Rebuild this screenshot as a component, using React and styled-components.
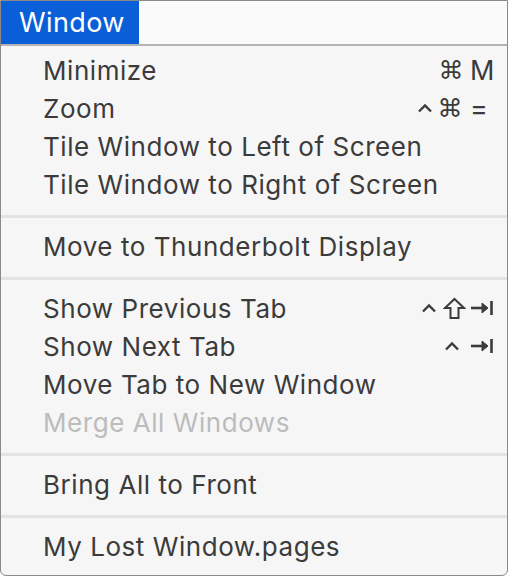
import React from 'react';
import styled, { createGlobalStyle } from 'styled-components';

const Global = createGlobalStyle`
  html, body { margin: 0; padding: 0; background: #ffffff; }
  body { font-family: Inter, "Noto Sans", "DejaVu Sans", sans-serif; }
`;

const Frame = styled.div`
  width: 508px;
  height: 576px;
  box-sizing: border-box;
  border: 1px solid #8a8a8a;
  border-radius: 0 0 6px 6px;
  background: #f6f6f6;
  overflow: hidden;
  display: flex;
  flex-direction: column;
`;

const MenuBar = styled.div`
  height: 43px;
  background: #fafafa;
  border-bottom: 2px solid #b4b4b4;
  display: flex;
`;

const MenuTitle = styled.div`
  width: 138px;
  background: #0a5fd8;
  color: #ffffff;
  font-size: 27px;
  letter-spacing: 0.4px;
  line-height: 43px;
  padding-left: 18px;
  box-sizing: border-box;
`;

const Menu = styled.div`
  padding: 5px 0 0;
  display: flex;
  flex-direction: column;
`;

const Item = styled.div`
  height: 38px;
  display: flex;
  align-items: center;
  justify-content: space-between;
  padding: 0 12px 0 42px;
  font-size: 26px;
  letter-spacing: 0.55px;
  color: ${p => (p.disabled ? '#bcbcbc' : '#3b3b3b')};
`;

const Separator = styled.div`
  height: 3px;
  background: #e3e3e3;
  margin: 12px 0 9px;
`;

const Shortcut = styled.div`
  display: flex;
  align-items: center;
  color: #3b3b3b;
`;

const Mods = styled.div`
  display: flex;
  align-items: center;
  justify-content: flex-end;
  gap: ${p => p.gap || 6}px;
`;

const Key = styled.div`
  width: 25px;
  margin-left: ${p => p.gap ?? 5}px;
  display: flex;
  align-items: center;
  font-size: 27px;
  letter-spacing: 0;
`;

const Cmd = styled.span`
  font-family: "DejaVu Sans", sans-serif;
  font-size: 25px;
  line-height: 1;
`;

const Ctrl = () => (
  <svg width="16" height="10" viewBox="0 0 16 10">
    <path d="M2 8.5 L8 2.5 L14 8.5" fill="none" stroke="#3b3b3b" strokeWidth="2.4" />
  </svg>
);

const Shift = () => (
  <svg width="23" height="23" viewBox="0 0 23 23">
    <path d="M11.5 2 L21 11 L15.5 11 L15.5 21 L7.5 21 L7.5 11 L2 11 Z" fill="none" stroke="#3b3b3b" strokeWidth="2" strokeLinejoin="miter" />
  </svg>
);

const Tab = () => (
  <svg width="24" height="16" viewBox="0 0 24 16">
    <path d="M1 8 L17 8" stroke="#3b3b3b" strokeWidth="2.6" />
    <path d="M12 3 L18 8 L12 13 Z" fill="#3b3b3b" stroke="#3b3b3b" strokeWidth="1" />
    <path d="M21.5 1 L21.5 15" stroke="#3b3b3b" strokeWidth="2.6" />
  </svg>
);

export default function App() {
  return (
    <>
      <Global />
      <Frame>
        <MenuBar>
          <MenuTitle>Window</MenuTitle>
        </MenuBar>
        <Menu>
          <Item>
            Minimize
            <Shortcut>
              <Mods><Cmd>⌘</Cmd></Mods>
              <Key gap={6}>M</Key>
            </Shortcut>
          </Item>
          <Item>
            Zoom
            <Shortcut>
              <Mods gap={4}><Ctrl /><Cmd>⌘</Cmd></Mods>
              <Key gap={7}>=</Key>
            </Shortcut>
          </Item>
          <Item>Tile Window to Left of Screen</Item>
          <Item>Tile Window to Right of Screen</Item>
          <Separator />
          <Item>Move to Thunderbolt Display</Item>
          <Separator />
          <Item>
            Show Previous Tab
            <Shortcut>
              <Mods><Ctrl /><Shift /></Mods>
              <Key gap={4}><Tab /></Key>
            </Shortcut>
          </Item>
          <Item>
            Show Next Tab
            <Shortcut>
              <Mods><Ctrl /></Mods>
              <Key gap={10}><Tab /></Key>
            </Shortcut>
          </Item>
          <Item>Move Tab to New Window</Item>
          <Item disabled>Merge All Windows</Item>
          <Separator />
          <Item>Bring All to Front</Item>
          <Separator />
          <Item>My Lost Window.pages</Item>
        </Menu>
      </Frame>
    </>
  );
}
